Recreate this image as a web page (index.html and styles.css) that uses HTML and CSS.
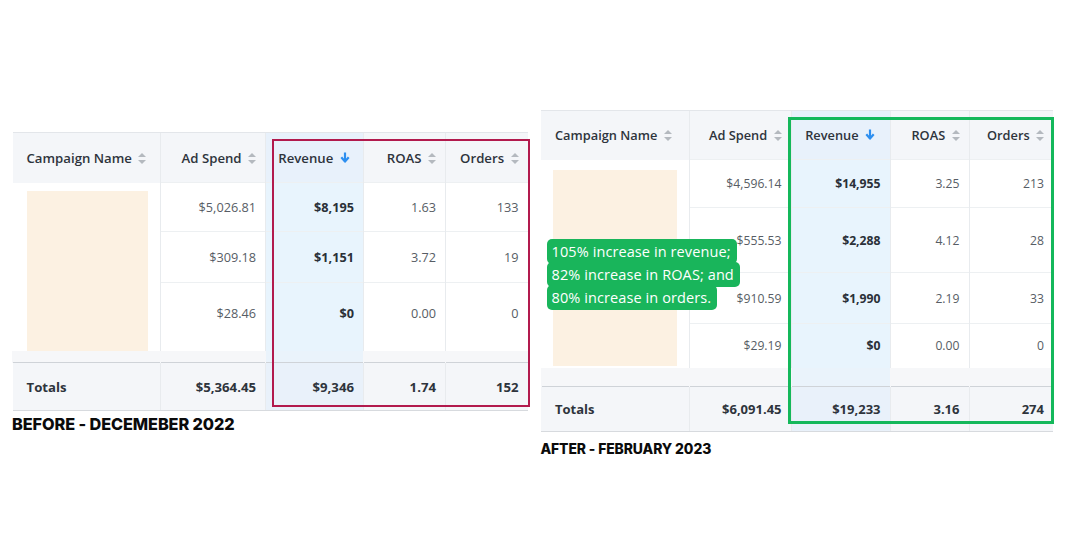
FILE: index.html
```html
<!DOCTYPE html>
<html lang="en">
<head>
<meta charset="utf-8">
<title>Before / After</title>
<link rel="stylesheet" href="styles.css">
</head>
<body>
<main class="page">
  <section class="panel panel-before">
    <div class="table-wrap">
      <table class="report report-before">
        <colgroup>
          <col class="c1"><col class="c2"><col class="c3"><col class="c4"><col class="c5">
        </colgroup>
        <thead>
          <tr>
            <th class="name">Campaign Name <span class="sort"></span></th>
            <th>Ad Spend <span class="sort"></span></th>
            <th class="rev">Revenue <svg class="arrow" viewBox="0 0 10 12"><path d="M5 0.5v8M1.3 5.2 5 9.6 8.7 5.2" fill="none" stroke="currentColor" stroke-width="2.2" stroke-linejoin="round"/></svg></th>
            <th>ROAS <span class="sort"></span></th>
            <th>Orders <span class="sort"></span></th>
          </tr>
        </thead>
        <tbody>
          <tr class="r1">
            <td class="name" rowspan="3"><div class="blank"></div></td>
            <td>$5,026.81</td><td class="rev">$8,195</td><td>1.63</td><td>133</td>
          </tr>
          <tr class="r2"><td>$309.18</td><td class="rev">$1,151</td><td>3.72</td><td>19</td></tr>
          <tr class="r3"><td>$28.46</td><td class="rev">$0</td><td>0.00</td><td>0</td></tr>
          <tr class="band"><td></td><td></td><td class="rev"></td><td></td><td></td></tr>
        </tbody>
        <tfoot>
          <tr>
            <td class="name">Totals</td><td>$5,364.45</td><td class="rev">$9,346</td><td>1.74</td><td>152</td>
          </tr>
        </tfoot>
      </table>
      <div class="frame frame-red"></div>
    </div>
    <p class="caption">BEFORE - DECEMEBER 2022</p>
  </section>

  <section class="panel panel-after">
    <div class="table-wrap">
      <table class="report report-after">
        <colgroup>
          <col class="c1"><col class="c2"><col class="c3"><col class="c4"><col class="c5">
        </colgroup>
        <thead>
          <tr>
            <th class="name">Campaign Name <span class="sort"></span></th>
            <th>Ad Spend <span class="sort"></span></th>
            <th class="rev">Revenue <svg class="arrow" viewBox="0 0 10 12"><path d="M5 0.5v8M1.3 5.2 5 9.6 8.7 5.2" fill="none" stroke="currentColor" stroke-width="2.2" stroke-linejoin="round"/></svg></th>
            <th>ROAS <span class="sort"></span></th>
            <th>Orders <span class="sort"></span></th>
          </tr>
        </thead>
        <tbody>
          <tr class="r1">
            <td class="name" rowspan="4"><div class="blank"></div></td>
            <td>$4,596.14</td><td class="rev">$14,955</td><td>3.25</td><td>213</td>
          </tr>
          <tr class="r2"><td>$555.53</td><td class="rev">$2,288</td><td>4.12</td><td>28</td></tr>
          <tr class="r3"><td>$910.59</td><td class="rev">$1,990</td><td>2.19</td><td>33</td></tr>
          <tr class="r4"><td>$29.19</td><td class="rev">$0</td><td>0.00</td><td>0</td></tr>
          <tr class="band"><td></td><td></td><td class="rev"></td><td></td><td></td></tr>
        </tbody>
        <tfoot>
          <tr>
            <td class="name">Totals</td><td>$6,091.45</td><td class="rev">$19,233</td><td>3.16</td><td>274</td>
          </tr>
        </tfoot>
      </table>
      <div class="frame frame-green"></div>
      <p class="callout"><span>105% increase in revenue;<br>82% increase in ROAS; and<br>80% increase in orders.</span></p>
    </div>
    <p class="caption caption-small">AFTER - FEBRUARY 2023</p>
  </section>
</main>
</body>
</html>
```
FILE: styles.css
```css
* { box-sizing: border-box; }

html, body {
  margin: 0;
  padding: 0;
  background: #ffffff;
}

body {
  width: 1075px;
  height: 541px;
  overflow: hidden;
  font-family: "Open Sans", sans-serif;
}

.page {
  display: flex;
  align-items: flex-start;
}

.panel-before {
  margin-left: 12px;
  margin-top: 132px;
}

.panel-after {
  margin-left: 13px;
  margin-top: 110px;
}

.table-wrap {
  position: relative;
}

.report {
  border-collapse: collapse;
  table-layout: fixed;
  color: #575d65;
  font-size: 12.7px;
}

.report-before { width: 515px; }
.report-after { width: 512px; font-size: 12.2px; }

.report-before .c1 { width: 148px; }
.report-before .c2 { width: 105px; }
.report-before .c3 { width: 98px; }
.report-before .c4 { width: 82px; }
.report-before .c5 { width: 82px; }

.report-after .c1 { width: 148px; }
.report-after .c2 { width: 102px; }
.report-after .c3 { width: 99px; }
.report-after .c4 { width: 79px; }
.report-after .c5 { width: 84px; }

.report th,
.report td {
  padding: 0 9px 0 8px;
  text-align: right;
  white-space: nowrap;
  border-left: 1px solid #e8ebee;
}

.report th:first-child,
.report td.name {
  border-left: none;
  text-align: left;
  padding-left: 14px;
}

.report thead th {
  background: #f4f6f9;
  color: #2e343c;
  font-weight: 600;
  font-size: 13.2px;
  border-top: 1px solid #e3e6ea;
  height: 50px;
}

.report-after thead th { height: 49px; font-size: 12.8px; }

.report thead th.rev {
  background: #e8f1fb;
  text-align: center;
}

.report tbody td {
  border-top: 1px solid #edf0f2;
}

.report tbody td.rev {
  background: #e8f4fd;
  color: #2a3038;
  font-weight: 700;
}

.report-before .r1 td { height: 49px; }
.report-before .r2 td { height: 51px; }
.report-before .r3 td { height: 68px; padding-bottom: 7px; }

.report-after .r1 td { height: 48px; }
.report-after .r2 td { height: 65px; }
.report-after .r3 td { height: 51px; }
.report-after .r4 td { height: 44px; }

.report td.name[rowspan] {
  vertical-align: top;
  padding: 8px 12px 0 14px;
  border-top: none;
}

.report-after td.name[rowspan] {
  padding: 10px 12px 0 12px;
}

.blank {
  background: #fcf1e2;
  height: 160px;
}

.report-after .blank { height: 196px; }

.report .band td {
  height: 12px;
  background: #f6f7f9;
  border-top: none;
  border-left-color: #f6f7f9;
}

.report-after .band td { height: 19px; }

.report .band td.rev { background: #eaf3fb; }

.report tfoot td {
  background: #f4f6f9;
  color: #2e343c;
  font-weight: 700;
  font-size: 13.2px;
  border-top: 1.5px solid #cfd3d8;
  border-bottom: 1.5px solid #d7dade;
  height: 48px;
}

.report-after tfoot td { height: 45px; font-size: 13px; }

.report tfoot td.rev { background: #e9f1fa; }

.sort {
  display: inline-block;
  position: relative;
  width: 8px;
  height: 11px;
  margin-left: 3px;
  vertical-align: -1px;
}

.sort::before,
.sort::after {
  content: "";
  position: absolute;
  left: 0;
  border-left: 4px solid transparent;
  border-right: 4px solid transparent;
}

.sort::before {
  top: 0;
  border-bottom: 4.5px solid #b4b9bf;
}

.sort::after {
  bottom: 0;
  border-top: 4.5px solid #b4b9bf;
}

.arrow {
  width: 10px;
  height: 12px;
  margin-left: 3px;
  color: #2d8ff0;
  vertical-align: -1px;
}

.frame {
  position: absolute;
  pointer-events: none;
}

.frame-red {
  left: 260px;
  top: 7px;
  width: 258px;
  height: 268px;
  border: 2px solid #b21a4d;
}

.frame-green {
  left: 247px;
  top: 7px;
  width: 266px;
  height: 307px;
  border: 3px solid #14b85b;
}

.callout {
  position: absolute;
  left: 6px;
  top: 130px;
  margin: 0;
  font-family: "Open Sans", sans-serif;
  font-size: 14.5px;
  font-weight: 500;
  letter-spacing: 0.1px;
  line-height: 23px;
  color: #ffffff;
}

.callout span {
  background: #19b55b;
  padding: 3px 6px 3px 5px;
  border-radius: 5px;
  -webkit-box-decoration-break: clone;
  box-decoration-break: clone;
}

.caption {
  margin: 3px 0 0;
  font-family: "Inter", sans-serif;
  font-weight: 800;
  font-size: 16.3px;
  line-height: 20px;
  color: #0b0b0b;
  letter-spacing: -0.1px;
}

.caption-small {
  margin-top: 8px;
  font-size: 13.9px;
  line-height: 18px;
}
```
